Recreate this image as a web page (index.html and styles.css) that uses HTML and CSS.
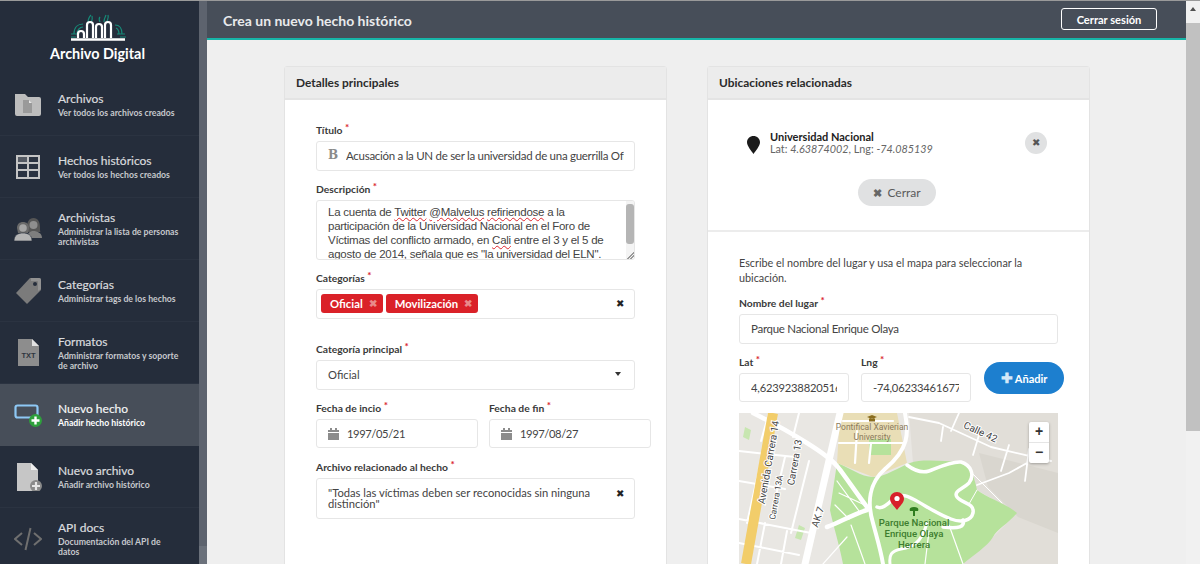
FILE: index.html
```html
<!DOCTYPE html>
<html lang="es">
<head>
<meta charset="utf-8">
<title>Crea un nuevo hecho histórico</title>
<link rel="stylesheet" href="styles.css">
</head>
<body>
<div class="app">
  <aside class="sidebar">
    <nav class="nav">
      <div class="brand">
        <svg class="logo" width="56" height="28" viewBox="0 0 56 28" fill="none">
          <g stroke="#168a78" stroke-width="1.2">
            <path d="M1 20h8M1 23h5M4 20c0-7 4-10 9-10M7 20c0-4 3-7 6-7"/>
            <path d="M47 20h8M50 23h6M52 20c0-6-3-9-7-9M49 20c0-3-1-5-3-6"/>
            <path d="M18 9c0-3 1-6 3-8M21 9c1-2 2-4 1-7M34 8c0-3 1-5 2-7M37 8c0-2 2-4 1-7M30 8c-1-2-1-4 0-5"/>
          </g>
          <path d="M1 25.500h54" stroke="#fff" stroke-width="2.400"/>
          <g stroke="#fff" stroke-width="2.200">
            <path d="M8 24v-4a3 3 0 0 1 6 0v4"/>
            <path d="M17 24V11a3 3 0 0 1 6 0v13"/>
            <path d="M26 24V13a3 3 0 0 1 6 0v11"/>
            <path d="M35 24V11a3 3 0 0 1 6 0v13"/>
          </g>
        </svg>
        <div class="brand-name">Archivo Digital</div>
      </div>
      <a class="nav-item">
        <svg class="nav-icon" width="28" height="28" viewBox="0 0 28 28"><path d="M1 3h10l3 3h11a2 2 0 0 1 2 2v15a2 2 0 0 1-2 2H3a2 2 0 0 1-2-2z" fill="#bdbdbd"/><path d="M9 9h6l3 3v10H9z" fill="#9a9a9a"/><path d="M15 9l3 3h-3z" fill="#e6e6e6"/></svg>
        <div class="nav-text"><div class="nav-title">Archivos</div><div class="nav-sub">Ver todos los archivos creados</div></div>
      </a>
      <a class="nav-item">
        <svg class="nav-icon" width="28" height="28" viewBox="0 0 28 28"><path d="M2 2h24v24H2z" fill="#c4c4c4"/><path d="M15 4h9v5h-9zM4 11h9v5H4zM15 11h9v5h-9zM4 18h9v6H4zM15 18h9v6h-9z" fill="#2b3341"/><path d="M4 4h9v5H4z" fill="#555a63"/></svg>
        <div class="nav-text"><div class="nav-title">Hechos históricos</div><div class="nav-sub">Ver todos los hechos creados</div></div>
      </a>
      <a class="nav-item">
        <svg class="nav-icon" width="28" height="28" viewBox="0 0 28 28"><path d="M13 12c0-5 2-9 6.500-9S26 7 26 12c0 3 0 4 .5 5h-14c.5-1 .5-2 .5-5z" fill="#565656"/><circle cx="19.500" cy="10" r="4" fill="#8e8e8e"/><path d="M13 23c0-5 3-7 6.500-7s8.500 2 8.500 7z" fill="#7e7e7e"/><path d="M3 13c0-4 2.500-6 6-6s6 2 6 6l-1 5H4z" fill="#6a6a6a"/><circle cx="9" cy="13" r="3.800" fill="#a5a5a5"/><path d="M0 26c0-6 4-8 9-8s9 2 9 8z" fill="#b4b4b4" stroke="#252d3b" stroke-width=".6"/></svg>
        <div class="nav-text"><div class="nav-title">Archivistas</div><div class="nav-sub">Administrar la lista de personas archivistas</div></div>
      </a>
      <a class="nav-item">
        <svg class="nav-icon" width="28" height="28" viewBox="0 0 28 28"><path d="M16 1h9a2 2 0 0 1 2 2v10L13 27 2 16z" fill="#7b7b7b"/><path d="M17 1h8a2 2 0 0 1 2 2v9l-3 2V5a1 1 0 0 0-1-1h-6z" fill="#929292"/><circle cx="21" cy="7" r="2" fill="#252d3b"/></svg>
        <div class="nav-text"><div class="nav-title">Categorías</div><div class="nav-sub">Administrar tags de los hechos</div></div>
      </a>
      <a class="nav-item">
        <svg class="nav-icon" width="28" height="28" viewBox="0 0 28 28"><path d="M4 0h14l7 7v20H4z" fill="#8d8d8d"/><path d="M18 0l7 7h-7z" fill="#e2e2e2"/><text x="14.500" y="19" class="txt-mark">TXT</text></svg>
        <div class="nav-text"><div class="nav-title">Formatos</div><div class="nav-sub">Administrar formatos y soporte de archivo</div></div>
      </a>
      <a class="nav-item active">
        <svg class="nav-icon" width="28" height="28" viewBox="0 0 28 28"><rect x="1.500" y="4.500" width="22" height="12" rx="2" fill="none" stroke="#8ec8f5" stroke-width="2.200"/><circle cx="21.500" cy="19.500" r="6.500" fill="#2ea03c"/><path d="M21.500 15.500v8M17.500 19.500h8" stroke="#fff" stroke-width="2.400"/></svg>
        <div class="nav-text"><div class="nav-title">Nuevo hecho</div><div class="nav-sub">Añadir hecho histórico</div></div>
      </a>
      <a class="nav-item">
        <svg class="nav-icon" width="28" height="28" viewBox="0 0 28 28"><path d="M3 0h14l7 7v21H3z" fill="#c6c6c6"/><path d="M17 0l7 7h-7z" fill="#ededed"/><circle cx="22" cy="23" r="6" fill="#8a8a8a"/><path d="M22 19v8M18 23h8" stroke="#e6e6e6" stroke-width="2.200"/></svg>
        <div class="nav-text"><div class="nav-title">Nuevo archivo</div><div class="nav-sub">Añadir archivo histórico</div></div>
      </a>
      <a class="nav-item">
        <svg class="nav-icon" width="28" height="28" viewBox="0 0 28 28" fill="none" stroke="#6f6f6f" stroke-width="2"><path d="M8 8l-7 6 7 6M20 8l7 6-7 6M16.500 3l-5 22"/></svg>
        <div class="nav-text"><div class="nav-title">API docs</div><div class="nav-sub">Documentación del API de datos</div></div>
      </a>
    </nav>
    <div class="side-scroll"><div class="side-thumb"></div></div>
  </aside>

  <main class="main">
    <header class="topbar">
      <h1 class="page-title">Crea un nuevo hecho histórico</h1>
      <button class="logout">Cerrar sesión</button>
    </header>
    <div class="columns">
      <section class="panel">
        <h2 class="panel-head">Detalles principales</h2>
        <form class="form form-main">
          <label class="label">Título <i>*</i></label>
          <div class="box box-title">
            <span class="serif-b">B</span>
            <input class="input" value="Acusación a la UN de ser la universidad de una guerrilla Oficial" readonly>
          </div>
          <label class="label">Descripción <i>*</i></label>
          <div class="textarea">
            <div class="ta-text">La cuenta de <u>Twitter</u> <u>@Malvelus</u> <u>refiriendose</u> a la participación de la Universidad Nacional en el Foro de Víctimas del conflicto armado, en <u>Cali</u> entre el 3 y el 5 de agosto de 2014, señala que es "la universidad del <u>ELN</u>".</div>
            <div class="ta-bar"><div class="ta-thumb"></div></div>
          </div>
          <label class="label">Categorías <i>*</i></label>
          <div class="box box-tags">
            <span class="tag">Oficial <b>✖</b></span>
            <span class="tag">Movilización <b>✖</b></span>
            <span class="clear">✖</span>
          </div>
          <label class="label">Categoría principal <i>*</i></label>
          <div class="box box-select">
            <span class="grow">Oficial</span>
            <span class="caret"></span>
          </div>
          <div class="dates">
            <div class="date-col">
              <label class="label">Fecha de incio <i>*</i></label>
              <div class="box box-date">
                <svg class="cal" width="11" height="12" viewBox="0 0 11 12"><path d="M2 0h2v2h3V0h2v2h2v2H0V2h2zM0 5h11v7H0z" fill="#8c8c8c"/></svg>
                <span>1997/05/21</span>
              </div>
            </div>
            <div class="date-col">
              <label class="label">Fecha de fin <i>*</i></label>
              <div class="box box-date">
                <svg class="cal" width="11" height="12" viewBox="0 0 11 12"><path d="M2 0h2v2h3V0h2v2h2v2H0V2h2zM0 5h11v7H0z" fill="#8c8c8c"/></svg>
                <span>1997/08/27</span>
              </div>
            </div>
          </div>
          <label class="label">Archivo relacionado al hecho <i>*</i></label>
          <div class="box box-file">
            <span class="grow file-text">"Todas las víctimas deben ser reconocidas sin ninguna distinción"</span>
            <span class="clear">✖</span>
          </div>
        </form>
      </section>

      <section class="panel">
        <h2 class="panel-head">Ubicaciones relacionadas</h2>
        <div class="places">
          <div class="place">
            <svg class="pin" width="13" height="18" viewBox="0 0 13 18"><path d="M6.500 0C3 0 0 2.600 0 6.200 0 10 4.500 15 6.500 18 8.500 15 13 10 13 6.200 13 2.600 10 0 6.500 0z" fill="#1b1b1b"/></svg>
            <div class="place-text">
              <div class="place-name">Universidad Nacional</div>
              <div class="place-coords">Lat: <em>4.63874002</em>, Lng: <em>-74.085139</em></div>
            </div>
            <button class="round-x">✖</button>
          </div>
          <button class="close-btn"><b>✖</b> Cerrar</button>
        </div>
        <div class="form form-place">
          <p class="help">Escribe el nombre del lugar y usa el mapa para seleccionar la ubicación.</p>
          <label class="label">Nombre del lugar <i>*</i></label>
          <div class="box box-name"><input class="input" value="Parque Nacional Enrique Olaya" readonly></div>
          <div class="coords">
            <div class="coord">
              <label class="label">Lat <i>*</i></label>
              <div class="box box-coord"><input class="input" value="4,623923882051648" readonly></div>
            </div>
            <div class="coord">
              <label class="label">Lng <i>*</i></label>
              <div class="box box-coord"><input class="input" value="-74,06233461677123" readonly></div>
            </div>
            <button class="add-btn"><b>✚</b> Añadir</button>
          </div>
          <div class="map">
            <svg class="map-svg" width="319" height="151" viewBox="0 0 319 151">
              <rect width="319" height="151" fill="#e9e7e3"/>
              <path d="M170 0h149v151h-95l30-27 24-24-40-23-14-27h-50z" fill="#e1ded8"/>
              <path d="M240 40l79 20v60l-40-16-30-30z" fill="#d9d6cf"/>
              <path d="M98 50C110 54 122 64 134 64S160 54 171 50s30-2 53-1c8 4 12 18 14 28 10 8 30 14 40 23-8 10-20 16-24 24-6 10-20 18-30 27H104C100 130 94 112 91 97z" fill="#b6e29b"/>
              <path d="M101 0h57l10 50-34 14-36-14z" fill="#e9deb6"/>
              <path d="M130 26h22v16h-22z" fill="#b6e29b"/>
              <path d="M6 14l6 3-2 10-6-3zM12 90l6 2-3 18-6-2zM60 112l6 3-4 12-6-2z" fill="#c7e6b0"/>
              <g fill="none" stroke="#fff" stroke-linecap="round" stroke-linejoin="round">
                <path d="M101 0L66 151" stroke-width="7"/>
                <path d="M14 0C34 10 52 20 68 30S92 46 98 53s20 28 30 41" stroke-width="4.500"/>
                <path d="M166 0C170 20 170 36 146 56 130 70 128 90 134 110 138 125 142 138 144 151" stroke-width="4"/>
                <path d="M128 97C112 102 100 110 88 114" stroke-width="4.500"/>
                <path d="M168 52C176 58 184 60 190 58S212 48 222 49C232 52 236 62 230 70 224 76 214 78 218 84 222 90 236 90 234 100 232 108 222 110 212 106 196 100 186 92 174 86 164 80 158 82 152 88 146 94 142 96 138 94" stroke-width="3.500"/>
                <path d="M224 107C226 114 220 116 204 114" stroke-width="3.500"/>
                <path d="M151 151C150 142 152 138 162 136S182 132 188 110" stroke-width="3"/>
                <path d="M233 60l30 30M238 77l-8 14" stroke-width="1"/>
                <path d="M0 38l56 6M0 68l46 8M0 106l72 14M0 130l60 12M30 0l-8 28M60 0l-6 24M46 44l-14 60M22 48L8 110M70 48L52 120M48 118l-6 33M26 110l-8 41" stroke-width="2"/>
                <path d="M170 4l30 6 52 24 60 14M220 0l-8 18M240 22l-6 20M270 32l-8 26M288 50l-18 10-32 12M290 36l-4 32M204 14l-2 14" stroke-width="1.800"/>
                <path d="M98 68l22 30M100 80l30 14M112 112l14 39M108 124l-24 27M96 92l14 14" stroke-width="1.200"/>
                <path d="M100 30h66M118 18l-2 32M132 30l-2 20M104 8h50" stroke-width="2.200"/>
                <path d="M210 112l14 39M190 118l-4 33" stroke-width="1.200"/>
              </g>
              <path d="M34 0L7 151" stroke="#f2cd6a" stroke-width="10" fill="none"/>
              <path d="M133 2l5 2-5 2-5-2z M130 5.500v3h6v-3z" fill="#8a6d1e"/>
              <text class="m-uni" x="133" y="17">Pontifical Xavierian</text>
              <text class="m-uni" x="133" y="27">University</text>
              <path d="M175 94c-4 0-5 2-4 4h3v5h2v-5h3c1-2 0-4-4-4z" fill="#2f7d1f"/>
              <text class="m-park" x="175" y="113">Parque Nacional</text>
              <text class="m-park" x="175" y="124">Enrique Olaya</text>
              <text class="m-park" x="175" y="135">Herrera</text>
              <text class="m-road m-big" transform="translate(33 50) rotate(-80)">Avenida Carrera 14</text>
              <text class="m-road" transform="translate(40 85) rotate(-80)">Carrera 13A</text>
              <text class="m-road m-big" transform="translate(59 50) rotate(-80)">Carrera 13</text>
              <text class="m-road m-big" transform="translate(82 105) rotate(-72)">AK 7</text>
              <text class="m-road m-big" transform="translate(240 22) rotate(25)">Calle 42</text>
            </svg>
            <svg class="map-pin" width="14" height="18" viewBox="0 0 14 18"><path d="M7 0C3 0 0 3 0 6.800 0 11 4.500 14.500 7 18c2.500-3.500 7-7 7-11.200C14 3 11 0 7 0z" fill="#d7202a"/><circle cx="7" cy="6.500" r="2.600" fill="#fff"/></svg>
            <div class="zoom-ctrl">
              <div class="zoom-btn">+</div>
              <div class="zoom-btn">−</div>
            </div>
          </div>
        </div>
      </section>
    </div>
  </main>

  <div class="page-scroll">
    <div class="arrow"></div>
    <div class="page-thumb"></div>
  </div>
</div>
</body>
</html>
```
FILE: styles.css
```css
* { box-sizing: border-box; }
html, body { margin: 0; height: 564px; overflow: hidden; }
body { font-family: Lato, "Liberation Sans", sans-serif; color: #333; background: #efefef; }
.app { display: flex; height: 564px; overflow: hidden; border-top: 1px solid #9a9a9a; }

/* sidebar */
.sidebar { width: 207px; flex: none; display: flex; background: #252d3b; }
.nav { width: 199px; flex: none; overflow: hidden; }
.side-scroll { width: 8px; background: #6b717b; padding-bottom: 18px; display: flex; flex-direction: column; }
.side-thumb { flex: 1; background: #5d636e; }
.brand { height: 73px; padding: 13px 4px 0 0; display: flex; flex-direction: column; align-items: center; }
.logo { display: block; margin-left: 1px; }
.brand-name { margin-top: 2px; font-size: 14.400px; font-weight: 700; color: #fff; line-height: 20px; }
.nav-item { display: flex; height: 62px; padding: 0 17px 0 14px; align-items: center; border-bottom: 1px solid #2b3341; }
.nav-item.active { background: #474e59; border-color: #474e59; }
.nav-icon { flex: none; margin-right: 16px; }
.nav-text { flex: 1; min-width: 0; }
.nav-title { font-size: 12px; font-weight: 400; line-height: 15px; margin-bottom: 2px; color: #d9dbde; -webkit-text-stroke: 0.2px #d9dbde; }
.nav-sub { font-size: 8.700px; font-weight: 700; line-height: 10.500px; color: #c5c8cc; }
.active .nav-title, .active .nav-sub { color: #fff; }
.txt-mark { font: 700 7.500px "Liberation Sans", sans-serif; text-anchor: middle; fill: #2f3540; }

/* main */
.main { flex: 1; min-width: 0; display: flex; flex-direction: column; }
.topbar { height: 39px; flex: none; display: flex; align-items: center; justify-content: space-between; padding: 2px 29px 0 16px; background: #474e59; border-bottom: 2px solid #16b5a8; }
.page-title { margin: 0; font-size: 14px; font-weight: 700; color: #e9eaec; }
.logout { width: 96px; height: 22px; padding: 0; margin-top: -3px; border: 1.500px solid #fff; border-radius: 3px; background: transparent; color: #fff; font: 700 11.100px Lato, sans-serif; }
.columns { flex: 1; display: flex; gap: 40px; align-items: flex-start; padding: 26px 0 0 77px; }
.panel { width: 383px; flex: none; background: #fff; border: 1px solid #e3e3e3; border-radius: 3px 3px 0 0; height: 700px; }
.panel-head { margin: 0; height: 33px; padding: 0 11px; background: #ececec; border-bottom: 2px solid #e4e4e4; font-size: 11.900px; font-weight: 700; line-height: 31px; color: #2b2b2b; }

/* form */
.form-main { padding: 23px 31px 0; }
.label { display: block; font-size: 10.300px; font-weight: 700; line-height: 14px; color: #3a3a3a; margin-bottom: 4px; }
.label i { color: #d9232d; font-style: normal; font-size: 10px; position: relative; top: -3px; }
.box { display: flex; align-items: center; background: #fff; border: 1px solid #e6e6e6; border-radius: 3px; font-size: 11.200px; color: #444; }
.input { flex: 1; min-width: 0; width: 100%; border: 0; outline: 0; padding: 0; background: transparent; font: 400 11.500px Lato, sans-serif; letter-spacing: -.28px; color: #444; }
.box-title { height: 30px; padding: 0 10px 2px 11px; margin-bottom: 11px; }
.serif-b { width: 18px; flex: none; font: 700 12px "DejaVu Serif", serif; color: #8a8a8a; }
.textarea { position: relative; height: 60px; border: 1px solid #e6e6e6; border-radius: 3px; overflow: hidden; margin-bottom: 11px; background: #fff; }
.textarea::after { content: ""; position: absolute; right: 0; bottom: 0; width: 8px; height: 8px; background: linear-gradient(135deg, transparent 55%, #999 55%, #999 65%, transparent 65%, transparent 75%, #999 75%, #999 85%, transparent 85%); }
.ta-text { padding: 4px 24px 0 11px; font: 11.500px/14px "Liberation Sans", Arial, sans-serif; letter-spacing: -.25px; color: #444; }
.ta-text u { text-decoration: underline wavy #e0252d 1px; text-underline-offset: 1px; }
.ta-bar { position: absolute; top: 0; right: 0; bottom: 0; width: 8px; background: #f4f4f4; padding: 3px 0 15px; }
.ta-thumb { height: 100%; background: #b5b5b5; border-radius: 3px; }
.box-tags { height: 30px; padding: 0 10px 2px 4px; gap: 3px; margin-bottom: 23px; }
.tag { display: flex; align-items: center; gap: 6px; height: 19px; padding: 0 6px 0 9px; background: #da2128; border-radius: 3px; color: #fff; font-size: 11.300px; font-weight: 700; }
.tag b { font-size: 10px; color: #e98a8a; }
.clear { margin-left: auto; font-size: 10px; color: #222; }
.box-select { height: 30px; padding: 0 13px 2px 11px; margin-bottom: 11px; }
.grow { flex: 1; min-width: 0; }
.caret { width: 0; height: 0; border: 3.500px solid transparent; border-top: 4px solid #333; border-bottom: 0; }
.dates { display: flex; gap: 11px; margin-right: -16px; margin-bottom: 12px; }
.date-col { flex: 1; min-width: 0; }
.box-date { height: 29px; padding: 0 11px; gap: 8px; letter-spacing: -.4px; }
.box-file { height: 41px; padding: 8px 10px 0 11px; align-items: flex-start; }
.file-text { line-height: 11px; }

/* right panel */
.places { height: 132px; padding: 30px 42px 0 39px; border-bottom: 2px solid #ececec; display: flex; flex-direction: column; }
.place { display: flex; align-items: center; }
.pin { flex: none; margin: 4px 10px 0 0; }
.place-text { flex: 1; }
.place-name { font-size: 11px; font-weight: 700; line-height: 13px; color: #222; }
.place-coords { font-size: 10.800px; line-height: 12px; color: #666; }
.round-x { width: 22px; height: 22px; padding: 0; border: 0; border-radius: 50%; background: #e0e1e2; color: #555; font-size: 9.500px; }
.close-btn { align-self: center; margin: 24px 0 0; width: 78px; height: 27px; padding: 0; border: 0; border-radius: 14px; background: #e0e1e2; color: #5a5a5a; font: 400 12px Lato, sans-serif; }
.close-btn b { font-size: 11px; color: #666; margin-right: 2px; }
.form-place { padding: 23px 31px 0; }
.help { margin: 0 0 11px; font-size: 10.800px; line-height: 15px; color: #444; }
.box-name { height: 30px; padding: 0 11px 2px; margin-bottom: 11px; }
.coords { display: flex; gap: 12px; align-items: flex-start; margin-bottom: 11px; }
.coord { width: 110px; flex: none; }
.box-coord { height: 29px; padding: 0 11px; }
.box-coord .input { font-size: 11.200px; letter-spacing: -.2px; }
.add-btn { width: 80px; height: 32px; margin: 7px -6px 0 1px; padding: 0; border: 0; border-radius: 16px; background: #1d7fcf; color: #fff; font: 700 11px Lato, sans-serif; }
.add-btn b { color: #d4e8f8; font-size: 14px; line-height: 12px; }
.map { position: relative; height: 300px; overflow: hidden; background: #e8e6e2; }
.map-svg { display: block; }
.map-pin { position: absolute; left: 151px; top: 79px; }
.zoom-ctrl { position: absolute; top: 9px; right: 9px; width: 20px; background: #fff; border-radius: 2px; box-shadow: 0 1px 3px rgba(0,0,0,.3); }
.zoom-btn { height: 20px; text-align: center; font: 700 14px/19px "Liberation Sans", sans-serif; color: #333; }
.zoom-btn + .zoom-btn { height: 21px; border-top: 1px solid #e5e5e5; }
.m-uni { font: 400 8.500px Roboto, sans-serif; fill: #8b7a5c; text-anchor: middle; }
.m-park { font: 500 9.600px Roboto, sans-serif; fill: #3d7d2e; text-anchor: middle; }
.m-road { font: 400 8.500px Roboto, sans-serif; fill: #444; text-anchor: middle; stroke: #fff; stroke-width: 2px; paint-order: stroke; }
.m-big { font-size: 10px; }

/* page scrollbar */
.page-scroll { width: 14px; flex: none; background: #f1f1f1; display: flex; flex-direction: column; align-items: center; }
.arrow { flex: none; width: 0; height: 4px; border: 3.500px solid transparent; border-top: 0; border-bottom: 4px solid #505050; margin-top: 6px; margin-bottom: 12px; }
.page-thumb { width: 100%; height: 408px; background: #c1c1c1; }
```
